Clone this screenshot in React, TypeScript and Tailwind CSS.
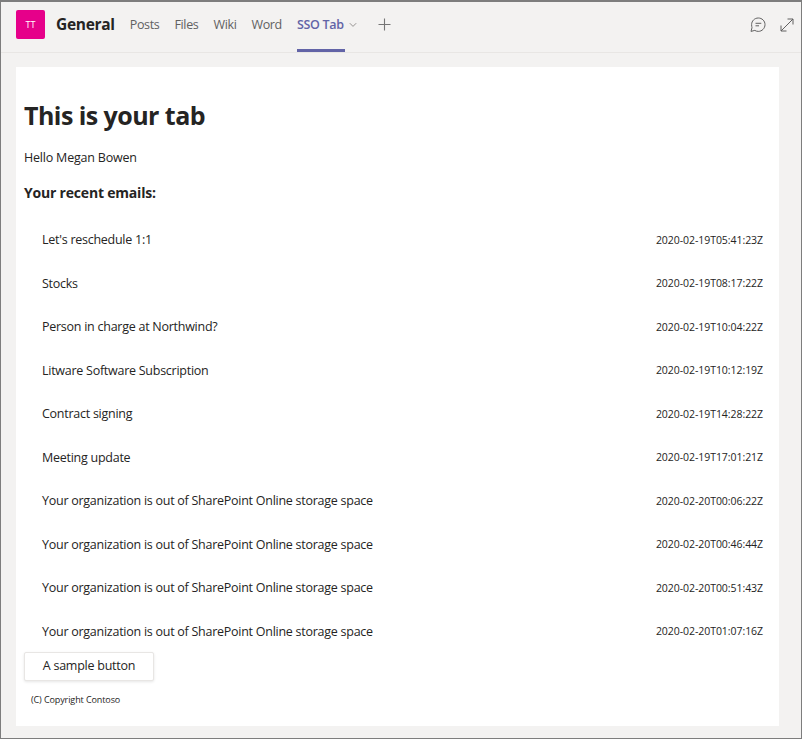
const FONT = "font-['Open_Sans','Noto_Sans',sans-serif]";

const emails = [
  ["Let's reschedule 1:1", '2020-02-19T05:41:23Z'],
  ['Stocks', '2020-02-19T08:17:22Z'],
  ['Person in charge at Northwind?', '2020-02-19T10:04:22Z'],
  ['Litware Software Subscription', '2020-02-19T10:12:19Z'],
  ['Contract signing', '2020-02-19T14:28:22Z'],
  ['Meeting update', '2020-02-19T17:01:21Z'],
  ['Your organization is out of SharePoint Online storage space', '2020-02-20T00:06:22Z'],
  ['Your organization is out of SharePoint Online storage space', '2020-02-20T00:46:44Z'],
  ['Your organization is out of SharePoint Online storage space', '2020-02-20T00:51:43Z'],
  ['Your organization is out of SharePoint Online storage space', '2020-02-20T01:07:16Z'],
];

function Tab({ label }: { label: string }) {
  return <span className="text-[12.500px] leading-[18px] tracking-[-0.35px] text-[#616161]">{label}</span>;
}

function Header() {
  return (
    <div className="flex h-[51px] shrink-0 items-center border-b border-[#e8e6e4] pb-[5px] pl-[15px] pr-[7px]">
      <div className="flex h-[29px] w-[29px] items-center justify-center rounded-[2px] bg-[#e6008a] text-[9px] text-white">
        TT
      </div>
      <span className="ml-[11px] pt-[1px] text-[15.500px] font-bold tracking-[-0.3px] text-[#252423]">General</span>
      <div className="ml-[15px] flex items-center gap-[15px] pt-[1px]">
        <Tab label="Posts" />
        <Tab label="Files" />
        <Tab label="Wiki" />
        <Tab label="Word" />
        <div className="relative flex items-center gap-[5px]">
          <span className="text-[12.500px] font-semibold leading-[18px] tracking-[-0.3px] text-[#6264a7]">SSO Tab</span>
          <svg width="8" height="6" viewBox="0 0 8 6" fill="none" stroke="#8a8886" strokeWidth="0.9" aria-hidden>
            <path d="M0.8 1.2 4 4.4 7.2 1.2" />
          </svg>
          <span className="absolute bottom-[-18px] left-0 h-[3px] w-[48px] bg-[#6264a7]" />
        </div>
      </div>
      <svg className="ml-[21px]" width="13" height="13" viewBox="0 0 13 13" stroke="#757575" strokeWidth="1.1" aria-hidden>
        <path d="M6.500 0.500V12.500M0.500 6.500H12.500" />
      </svg>
      <div className="ml-auto flex items-center gap-[14px]">
        <svg width="16" height="16" viewBox="0 0 16 16" fill="none" stroke="#616161" strokeWidth="1" aria-hidden>
          <path d="M8.300 1C12 1 15 3.900 15 7.600s-3 6.800-6.700 6.800c-1.300 0-2.500-.4-3.500-1L1 14.400l1-3.700C1.800 9.900 1.600 8.800 1.600 7.600 1.600 3.900 4.600 1 8.300 1Z" />
          <path d="M5.500 6.300h5.800M5.500 8.800h3.500" />
        </svg>
        <svg width="14" height="14" viewBox="0 0 14 14" fill="none" stroke="#616161" strokeWidth="1" aria-hidden>
          <path d="M1 13 13 1M7.500 1H13v5.500M1 7.500V13h5.500" />
        </svg>
      </div>
    </div>
  );
}

export default function App() {
  return (
    <div className={`${FONT} h-[740px] w-[802px] bg-white`}>
      <div className="flex h-[739px] flex-col border border-t-2 border-[#7d7d7d] bg-[#f3f2f1]">
        <Header />
        <div className="mx-[15px] mt-[14px] h-[659px] w-[763px] bg-white pl-[8px] pr-[16px]">
          <h1 className="pt-[31px] text-[25px] font-bold leading-[34px] tracking-[-0.55px] text-[#252423]">
            This is your tab
          </h1>
          <p className="mt-[17px] text-[12.500px] leading-[18px] tracking-[-0.2px] text-[#252423]">Hello Megan Bowen</p>
          <h3 className="mt-[16px] text-[14px] font-bold leading-[19px] tracking-[-0.2px] text-[#252423]">
            Your recent emails:
          </h3>
          <ul className="mt-[17px] pl-[18px]">
            {emails.map(([subject, date]) => (
              <li key={date} className="flex h-[43.500px] items-center justify-between">
                <span className="text-[12.500px] tracking-[-0.26px] text-[#252423]">{subject}</span>
                <span className="text-[10.500px] tracking-[-0.05px] text-[#252423]">{date}</span>
              </li>
            ))}
          </ul>
          <button
            type="button"
            className="mt-[-2px] block h-[29px] w-[130px] rounded-[2px] border border-[#e8e6e4] bg-white text-[12.500px] tracking-[-0.25px] text-[#252423] shadow-[0_1px_3px_rgba(0,0,0,0.1)]"
          >
            A sample button
          </button>
          <p className="ml-[7px] mt-[13px] text-[9px] leading-[12px] tracking-[-0.1px] text-[#252423]">(C) Copyright Contoso</p>
        </div>
      </div>
    </div>
  );
}
